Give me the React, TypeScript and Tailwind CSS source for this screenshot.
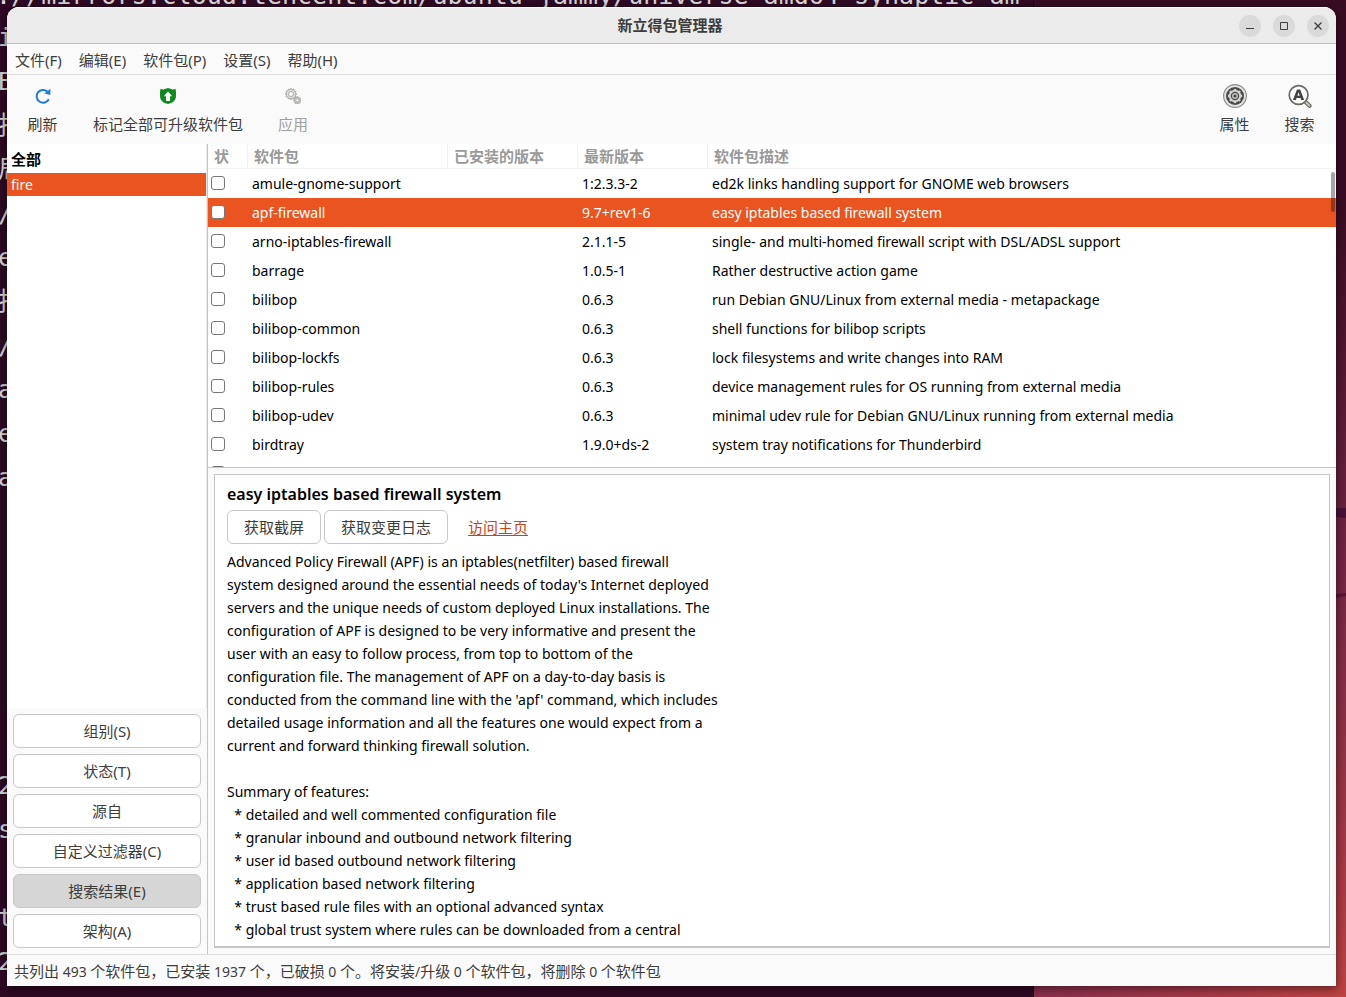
import React, { useState } from "react";

const packages = [
  ["amule-gnome-support", "1:2.3.3-2", "ed2k links handling support for GNOME web browsers"],
  ["apf-firewall", "9.7+rev1-6", "easy iptables based firewall system"],
  ["arno-iptables-firewall", "2.1.1-5", "single- and multi-homed firewall script with DSL/ADSL support"],
  ["barrage", "1.0.5-1", "Rather destructive action game"],
  ["bilibop", "0.6.3", "run Debian GNU/Linux from external media - metapackage"],
  ["bilibop-common", "0.6.3", "shell functions for bilibop scripts"],
  ["bilibop-lockfs", "0.6.3", "lock filesystems and write changes into RAM"],
  ["bilibop-rules", "0.6.3", "device management rules for OS running from external media"],
  ["bilibop-udev", "0.6.3", "minimal udev rule for Debian GNU/Linux running from external media"],
  ["birdtray", "1.9.0+ds-2", "system tray notifications for Thunderbird"],
];

const description = `Advanced Policy Firewall (APF) is an iptables(netfilter) based firewall
system designed around the essential needs of today's Internet deployed
servers and the unique needs of custom deployed Linux installations. The
configuration of APF is designed to be very informative and present the
user with an easy to follow process, from top to bottom of the
configuration file. The management of APF on a day-to-day basis is
conducted from the command line with the 'apf' command, which includes
detailed usage information and all the features one would expect from a
current and forward thinking firewall solution.

Summary of features:
  * detailed and well commented configuration file
  * granular inbound and outbound network filtering
  * user id based outbound network filtering
  * application based network filtering
  * trust based rule files with an optional advanced syntax
  * global trust system where rules can be downloaded from a central`;

const menus = ["文件(F)", "编辑(E)", "软件包(P)", "设置(S)", "帮助(H)"];
const views = ["组别(S)", "状态(T)", "源自", "自定义过滤器(C)", "搜索结果(E)", "架构(A)"];
const headers = ["软件包", "已安装的版本", "最新版本", "软件包描述"];

const status = "共列出 493 个软件包，已安装 1937 个，已破损 0 个。将安装/升级 0 个软件包，将删除 0 个软件包";

const terminalTop = "://mirrors.cloud.tencent.com/ubuntu jammy/universe amd64 synaptic am";
const terminalLeft = [
  "i", "B", "报", "局", "/", "e", "报", "/", "a", "e", "a", "", "", "", "", "", "", "2", "s", "", "t", "2",
];

function angles(count: number) {
  return Array.from({ length: count }, (_, i) => (i * 360) / count);
}

function RefreshIcon() {
  return (
    <svg width="16" height="16" viewBox="0 0 16 16" aria-hidden="true">
      <path d="M13.8 11.2A6.4 6.4 0 1 1 12.4 3.6" fill="none" stroke="#1f7fd6" strokeWidth="2" />
      <path d="M15.4 .8v6.2L9.4 5.4z" fill="#1f7fd6" />
    </svg>
  );
}

function UpgradeIcon() {
  return (
    <svg width="16" height="16" viewBox="0 0 16 16" aria-hidden="true">
      <path d="M.6 .8C2 1.8 3.4 1.8 4.6 1 5.8 .4 7 .6 8 0c1 .6 2.2 .4 3.4 1 1.2 .8 2.6 .8 4-.2C16.2 3.600 16 6 16 8c0 4.200-3.200 7-8 8-4.800-1-8-3.800-8-8C0 6-.2 3.600 .6 .8z" fill="#12891f" />
      <path d="M8 3.4l4.200 4.800H10V13H6V8.200H3.800z" fill="#fff" />
    </svg>
  );
}

function Cog({ cx, cy, r }: { cx: number; cy: number; r: number }) {
  return (
    <g>
      {angles(12).map((a) => (
        <rect key={a} x={cx - 0.7} y={cy - r - 0.7} width="1.4" height="1.6" fill="#adadab" transform={`rotate(${a} ${cx} ${cy})`} />
      ))}
      <circle cx={cx} cy={cy} r={r - 0.5} fill="#dededc" stroke="#adadab" strokeWidth="1" />
      <circle cx={cx} cy={cy} r={r / 2.1} fill="#fafafa" stroke="#adadab" strokeWidth="1" />
    </g>
  );
}

function ApplyIcon() {
  return (
    <svg width="16" height="16" viewBox="0 0 16 16" aria-hidden="true">
      <Cog cx={6} cy={6} r={5.3} />
      <Cog cx={12.3} cy={12.3} r={3.3} />
    </svg>
  );
}

function PropertiesIcon() {
  return (
    <svg width="24" height="24" viewBox="0 0 24 24" aria-hidden="true">
      <circle cx="12" cy="12" r="11.4" fill="#e2e2e0" stroke="#8a8a8a" strokeWidth="1.1" />
      <circle cx="12" cy="12" r="9" fill="#4a4a4a" />
      {angles(8).map((a) => (
        <rect key={a} x="10.8" y="4.9" width="2.4" height="3" fill="#d4d4d2" transform={`rotate(${a} 12 12)`} />
      ))}
      <circle cx="12" cy="12" r="5.2" fill="#4a4a4a" stroke="#d4d4d2" strokeWidth="2" />
      <circle cx="12" cy="12" r="2.3" fill="#4a4a4a" stroke="#c4c4c2" strokeWidth="1.4" />
    </svg>
  );
}

function SearchIcon() {
  return (
    <svg width="24" height="24" viewBox="0 0 24 24" aria-hidden="true">
      <path d="M17 17.500l4.600 4.300" stroke="#62635d" strokeWidth="4" strokeLinecap="round" />
      <path d="M17.600 18l3.900 3.700" stroke="#c4c5be" strokeWidth="1.9" strokeLinecap="round" />
      <circle cx="10.6" cy="11" r="9.400" fill="#fdfdfd" stroke="#6a6b64" strokeWidth="1.7" />
      <path d="M9 5.500h3.200l4 10.500h-3l-.7-2H8.600l-.7 2h-3zM9.400 11.800h2.300l-1.150-3.500z" fill="#444" fillRule="evenodd" />
    </svg>
  );
}

function ToolButton({ icon, label, disabled, className }: { icon: React.ReactNode; label: string; disabled?: boolean; className: string }) {
  return (
    <button disabled={disabled} className={`flex flex-col items-center ${className}`}>
      <span className="flex h-6 items-center">{icon}</span>
      <span className="mt-1 leading-6">{label}</span>
    </button>
  );
}

function TitleBar() {
  const round = "flex size-[22px] items-center justify-center rounded-full bg-[#dadada]";
  return (
    <header className="grid h-[37px] grid-cols-[1fr_auto_1fr] items-center border-t border-b border-t-white border-b-[#bfbfbf] bg-[#ebebeb] pr-[7px] pl-1">
      <span />
      <h1 className="font-bold text-[#3d3d3d]">新立得包管理器</h1>
      <div className="flex justify-end gap-3">
        <button aria-label="最小化" className={round}>
          <svg width="10" height="10" viewBox="0 0 10 10"><path d="M1 7.500h8" stroke="#3d3d3d" /></svg>
        </button>
        <button aria-label="最大化" className={round}>
          <svg width="10" height="10" viewBox="0 0 10 10"><path d="M1.500 1.500h7v7h-7z" fill="none" stroke="#3d3d3d" /></svg>
        </button>
        <button aria-label="关闭" className={round}>
          <svg width="10" height="10" viewBox="0 0 10 10"><path d="M1.500 1.500l7 7m0-7l-7 7" stroke="#3d3d3d" strokeWidth="1.3" /></svg>
        </button>
      </div>
    </header>
  );
}

function Sidebar() {
  return (
    <aside className="flex w-[201px] shrink-0 flex-col border-r border-[#c6c6c6]">
      <ul className="flex-1 border-r border-[#e8e8e8] bg-white pt-0.5 text-black">
        <li><button className="block h-[27px] w-full pl-1 text-left leading-[27px] font-bold">全部</button></li>
        <li><button className="block h-[23px] w-full bg-[#e95420] pl-1 text-left text-[14px] leading-[23px] text-white">fire</button></li>
      </ul>
      <div className="flex flex-col gap-1.5 p-1.5">
        {views.map((v) => (
          <button
            key={v}
            aria-pressed={v === "搜索结果(E)"}
            className="h-[34px] rounded-md border border-[#c8c8c8] bg-white aria-pressed:bg-[#d6d6d6]"
          >
            {v}
          </button>
        ))}
      </div>
    </aside>
  );
}

function Check({ label }: { label: string }) {
  return (
    <input
      type="checkbox"
      aria-label={label}
      className="mb-0.5 ml-[3px] block h-[14px] w-[14px] appearance-none rounded-[3px] border border-[#777] bg-white checked:bg-[#e95420]"
    />
  );
}

function PackageList() {
  const [selected, setSelected] = useState("apf-firewall");
  return (
    <div className="relative h-[324px] shrink-0 overflow-hidden border-b border-[#c4c4c4] bg-white">
      <table className="w-full table-fixed border-separate border-spacing-0">
        <colgroup>
          <col className="w-10" />
          <col className="w-[200px]" />
          <col className="w-[130px]" />
          <col className="w-[130px]" />
          <col />
        </colgroup>
        <thead className="text-left text-[#999]">
          <tr className="h-[25px]">
            <th className="border-r border-b border-[#f2f2f2] p-0 pl-1.5 leading-6">
              <span className="block w-[15px] overflow-hidden">状</span>
            </th>
            {headers.map((h) => (
              <th key={h} className="border-r border-b border-[#f2f2f2] p-0 pl-1.5 leading-6 last:border-r-0">{h}</th>
            ))}
          </tr>
        </thead>
        <tbody className="text-[14px] whitespace-nowrap text-black">
          {packages.map(([name, version, summary]) => (
            <tr
              key={name}
              onClick={() => setSelected(name)}
              aria-selected={selected === name}
              className="h-[29px] aria-selected:bg-[#e95420] aria-selected:text-white"
            >
              <td className="p-0"><Check label={name} /></td>
              <td className="p-0 pl-1">{name}</td>
              <td className="p-0" />
              <td className="p-0 pl-1">{version}</td>
              <td className="p-0 pl-1">{summary}</td>
            </tr>
          ))}
          <tr className="h-[29px]">
            <td className="p-0"><Check label="下一个软件包" /></td>
            <td colSpan={4} />
          </tr>
        </tbody>
      </table>
      <div className="absolute top-7 right-px h-10 w-1 rounded-full bg-black/35" />
    </div>
  );
}

function Details() {
  const button = "h-[34px] rounded-md border border-[#c8c8c8] bg-white px-4";
  return (
    <section className="m-1.5 flex-1 overflow-hidden border border-b-2 border-[#c6c6c6] bg-white px-3 pt-2 text-[14px] text-black">
      <h2 className="text-[16px] leading-[23px] font-semibold">easy iptables based firewall system</h2>
      <div className="mt-1 flex items-center gap-[3px] text-[15px] text-[#3d3d3d]">
        <button className={button}>获取截屏</button>
        <button className={button}>获取变更日志</button>
        <a href="#home" className="ml-[17px] text-[#cb4314] underline underline-offset-2">访问主页</a>
      </div>
      <p className="mt-1.5 leading-[23px] whitespace-pre">{description}</p>
    </section>
  );
}

function Desktop() {
  const mono = "font-['DejaVu_Sans_Mono','Noto_Sans_CJK_SC',monospace] text-[25px] leading-[44px] text-[#dedade]";
  return (
    <div aria-hidden="true" className="absolute inset-0 -z-10 overflow-hidden bg-linear-to-b from-[#3a0c24] from-20% via-[#7b2846] via-60% to-[#c04342]">
      <div className="absolute inset-x-0 bottom-0 h-[11px] bg-linear-to-r from-[#8c2f4d] from-77% to-[#c04342]" />
      <svg className="absolute top-[508px] right-0" width="10" height="96" viewBox="0 0 10 96">
        <path d="M0 0h10v10L0 9z" fill="#4a1038" />
        <path d="M0 86l10-1v3l-10 2z" fill="#5c1636" />
      </svg>
      <div className="absolute inset-y-0 left-0 w-[1034px] overflow-hidden border-r border-[#1b0414] bg-[#300a24]">
        <pre className={`absolute top-0 left-0 h-[7px] w-full overflow-hidden ${mono}`}>
          <span className="-mt-[26px] -ml-1 block">{terminalTop}</span>
        </pre>
        <pre className={`absolute top-[7px] bottom-0 left-0 w-[7px] overflow-hidden ${mono}`}>
          <span className="mt-[9px] -ml-0.5 block">{terminalLeft.join("\n")}</span>
        </pre>
      </div>
    </div>
  );
}

export default function App() {
  return (
    <div className="relative isolate flex min-h-screen overflow-hidden pt-[7px] pr-2.5 pb-[11px] pl-[7px] font-['Noto_Sans','Noto_Sans_CJK_SC',sans-serif] text-[15px] text-[#3d3d3d]">
      <Desktop />
      <main className="flex min-w-0 flex-1 flex-col overflow-hidden rounded-t-xl bg-[#fafafa] shadow-[0_2px_10px_1px_rgba(0,0,0,0.5)]">
        <TitleBar />
        <nav className="flex h-[31px] items-center gap-[17px] border-b border-[#dedede] px-2 pt-0.5">
          {menus.map((m) => <button key={m}>{m}</button>)}
        </nav>
        <div className="flex h-[69px] items-start pt-[9px]">
          <ToolButton icon={<RefreshIcon />} label="刷新" className="w-[71px]" />
          <ToolButton icon={<UpgradeIcon />} label="标记全部可升级软件包" className="w-[180px]" />
          <ToolButton icon={<ApplyIcon />} label="应用" disabled className="w-[70px] text-[#a0a0a0]" />
          <ToolButton icon={<PropertiesIcon />} label="属性" className="ml-auto w-[65px]" />
          <ToolButton icon={<SearchIcon />} label="搜索" className="mr-1 w-[65px]" />
        </div>
        <div className="flex min-h-0 flex-1">
          <Sidebar />
          <div className="flex min-w-0 flex-1 flex-col">
            <PackageList />
            <Details />
          </div>
        </div>
        <footer className="h-8 border-t border-[#dedede] px-[7px] pt-px leading-[30px] whitespace-pre">
          {status.split(/([ \d/]+)/).map((part, i) =>
            i % 2 ? <span key={i} className="text-[14px]">{part}</span> : part
          )}
        </footer>
      </main>
    </div>
  );
}
